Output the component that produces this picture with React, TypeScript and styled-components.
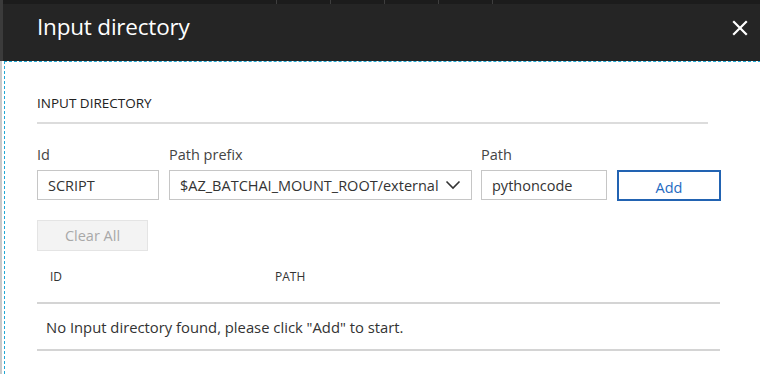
import React from "react";
import styled, { createGlobalStyle } from "styled-components";

const GlobalStyle = createGlobalStyle`
  html, body {
    margin: 0;
    padding: 0;
    background: #ffffff;
    font-family: "Open Sans", "Noto Sans", sans-serif;
  }
`;

const Page = styled.div`
  width: 760px;
  height: 374px;
  overflow: hidden;
  display: flex;
  flex-direction: column;
  background: #ffffff;
`;

const TopStrip = styled.div`
  height: 4px;
  background: #1c1c1c;
  display: flex;
  padding-left: 273px;
  border-left: 3px solid #3b3b3b;
`;

const StripTab = styled.div`
  width: 53px;
  border-left: 1px solid #3e3e3e;
`;

const Header = styled.div`
  height: 57px;
  background: #252525;
  border-left: 3px solid #3b3b3b;
  display: flex;
  align-items: flex-start;
  justify-content: space-between;
  padding: 7px 11px 0 34px;
  box-sizing: border-box;
`;

const Title = styled.h1`
  margin: 0;
  font-size: 22.5px;
  font-weight: 400;
  color: #ffffff;
  letter-spacing: -0.2px;
`;

const CloseButton = styled.button`
  margin-top: 8px;
  width: 18px;
  height: 18px;
  padding: 0;
  border: none;
  background: transparent;
  cursor: pointer;
  display: flex;
  align-items: center;
  justify-content: center;
`;

const Body = styled.div`
  flex: 1;
  display: flex;
  border-left: 2px solid #c9c9c9;
  padding-left: 2px;
`;

const Content = styled.div`
  flex: 1;
  border-top: 1px dashed #22a8d4;
  border-left: 1px dashed #22a8d4;
  padding: 32px 40px 0 32px;
`;

const SectionTitle = styled.h2`
  margin: 0;
  font-size: 13.5px;
  font-weight: 400;
  color: #222222;
  text-transform: uppercase;
`;

const Divider = styled.div`
  margin-top: 10px;
  width: 671px;
  height: 2px;
  background: #dcdcdc;
`;

const FormRow = styled.div`
  margin-top: 21px;
  display: flex;
  align-items: flex-end;
`;

const Field = styled.div<{ $width: number; $gap?: number }>`
  width: ${(p) => p.$width}px;
  margin-right: ${(p) => p.$gap ?? 10}px;
  display: flex;
  flex-direction: column;
`;

const Label = styled.label`
  font-size: 14.5px;
  color: #444444;
  line-height: 20px;
  margin-bottom: 5px;
`;

const TextInput = styled.div`
  height: 30px;
  box-sizing: border-box;
  border: 1px solid #c6c6c6;
  padding: 0 10px;
  display: flex;
  align-items: center;
  font-size: 14.5px;
  color: #333333;
`;

const Select = styled(TextInput)`
  padding: 0 2px 0 10px;
  white-space: nowrap;
  overflow: hidden;
  gap: 6px;
`;

const AddButton = styled.button`
  width: 104px;
  height: 31px;
  margin-bottom: -1px;
  border: 2px solid #2263b2;
  background: #ffffff;
  color: #1f6bc2;
  font-family: inherit;
  font-size: 14.5px;
  padding: 3px 0 0;
  cursor: pointer;
`;

const ClearButton = styled.button`
  margin-top: 20px;
  width: 111px;
  height: 31px;
  border: 1px solid #e4e4e4;
  background: #f3f3f3;
  color: #a8a8a8;
  font-family: inherit;
  font-size: 14.5px;
  padding: 0;
`;

const Table = styled.div`
  width: 683px;
`;

const TableHead = styled.div`
  display: grid;
  grid-template-columns: 225px 1fr;
  padding: 0 0 0 13px;
  height: 51px;
  align-items: center;
  border-bottom: 2px solid #d4d4d4;
  font-size: 12px;
  color: #333333;
`;

const EmptyRow = styled.div`
  height: 45px;
  padding-left: 9px;
  display: flex;
  align-items: center;
  border-bottom: 2px solid #d4d4d4;
  font-size: 14.8px;
  color: #333333;
`;

export default function App() {
  return (
    <Page>
      <GlobalStyle />
      <TopStrip>
        <StripTab />
        <StripTab />
        <StripTab />
        <StripTab />
        <StripTab />
      </TopStrip>
      <Header>
        <Title>Input directory</Title>
        <CloseButton aria-label="Close">
          <svg width="16" height="16" viewBox="0 0 16 16">
            <path d="M2 2 L14 14 M14 2 L2 14" stroke="#ffffff" strokeWidth="2.2" strokeLinecap="square" />
          </svg>
        </CloseButton>
      </Header>
      <Body>
        <Content>
          <SectionTitle>Input directory</SectionTitle>
          <Divider />
          <FormRow>
            <Field $width={122}>
              <Label>Id</Label>
              <TextInput>SCRIPT</TextInput>
            </Field>
            <Field $width={303} $gap={9}>
              <Label>Path prefix</Label>
              <Select>
                <span>$AZ_BATCHAI_MOUNT_ROOT/external</span>
                <svg width="16" height="10" viewBox="0 0 16 10">
                  <path d="M1.5 1.5 L8 8 L14.5 1.5" fill="none" stroke="#333333" strokeWidth="1.6" />
                </svg>
              </Select>
            </Field>
            <Field $width={126}>
              <Label>Path</Label>
              <TextInput>pythoncode</TextInput>
            </Field>
            <AddButton>Add</AddButton>
          </FormRow>
          <ClearButton disabled>Clear All</ClearButton>
          <Table>
            <TableHead>
              <span>ID</span>
              <span>PATH</span>
            </TableHead>
            <EmptyRow>No Input directory found, please click "Add" to start.</EmptyRow>
          </Table>
        </Content>
      </Body>
    </Page>
  );
}
